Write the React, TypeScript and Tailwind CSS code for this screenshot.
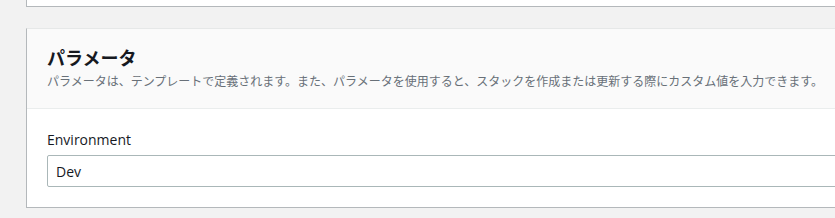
import React from "react";

const font = { fontFamily: '"Noto Sans CJK JP", "Noto Sans", sans-serif' };

export default function App() {
  return (
    <div className="w-[835px] h-[218px] overflow-hidden bg-[#f2f2f2]" style={font}>
      <div className="ml-[26px] w-[900px]">
        <div className="h-[7px] bg-white border-l border-b border-[#b4b8bb]"></div>
        <div className="mt-[21px] bg-white border-l border-b border-[#b4b8bb] border-t border-t-[#e6e8e8]">
          <div className="bg-[#fafafa] border-b border-[#eaeded] pl-5 pt-[17px] pb-[19px]">
            <h2 className="text-[18px] leading-[22px] font-bold text-[#16191f]">パラメータ</h2>
            <p className="mt-[5px] text-[12px] leading-[16px] text-[#687078]">
              パラメータは、テンプレートで定義されます。また、パラメータを使用すると、スタックを作成または更新する際にカスタム値を入力できます。
            </p>
          </div>
          <div className="pl-5 pt-[20px] pb-[20px]">
            <label className="block text-[14px] leading-[22px] text-[#16191f]" style={{ fontFamily: '"Open Sans", "Noto Sans", sans-serif' }}>Environment</label>
            <div className="mt-[4px] h-[32px] border border-[#aab7b8] rounded-[2px] bg-white flex items-center px-2">
              <span className="text-[14px] text-[#16191f]" style={{ fontFamily: '"Open Sans", "Noto Sans", sans-serif' }}>Dev</span>
            </div>
          </div>
        </div>
      </div>
    </div>
  );
}
